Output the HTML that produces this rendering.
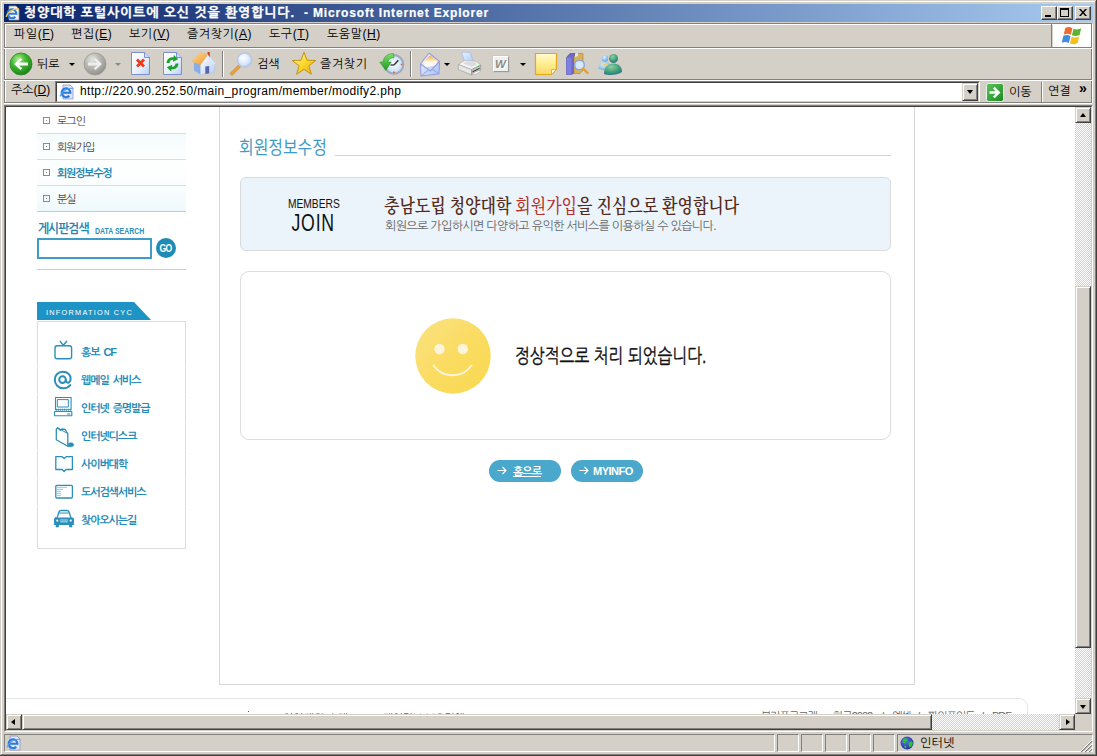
<!DOCTYPE html>
<html lang="ko">
<head>
<meta charset="utf-8">
<title>청양대학 포털사이트에 오신 것을 환영합니다.</title>
<style>
*{box-sizing:border-box;margin:0;padding:0}
html,body{width:1097px;height:756px;overflow:hidden;background:#d4d0c8}
body{font-family:"Liberation Sans","NanumGothic","Noto Sans CJK KR",sans-serif;font-size:12px;color:#000;position:relative}
.a{position:absolute;white-space:nowrap}
.u{text-decoration:underline}
#win{position:absolute;left:0;top:0;width:1097px;height:756px;background:#d4d0c8}
/* outer frame */
.f{position:absolute;background:#fff}
#title{position:absolute;left:4px;top:4px;width:1089px;height:18px;background:linear-gradient(90deg,#0a246a 0%,#a6caf0 100%);color:#fff;font-weight:bold;font-size:12px;line-height:18px;white-space:nowrap}
.cb{position:absolute;top:2px;width:16px;height:14px;background:#d4d0c8;border:1px solid;border-color:#fff #404040 #404040 #fff;box-shadow:inset -1px -1px 0 #808080}
.mi{position:absolute;top:27px;font-size:12px;line-height:14px;white-space:nowrap;letter-spacing:.55px}
.tl{position:absolute;font-size:12px;line-height:14px;white-space:nowrap}
.dd{position:absolute;width:0;height:0;border-left:3px solid transparent;border-right:3px solid transparent;border-top:3px solid #000}
.sep{position:absolute;width:2px;border-left:1px solid #808080;border-right:1px solid #fff}
.hsep{position:absolute;left:4px;width:1088px;height:2px;border-top:1px solid #808080;border-bottom:1px solid #fff}
.sunk{position:absolute;border:1px solid;border-color:#808080 #fff #fff #808080}
.sbtn{position:absolute;width:16px;height:16px;background:#d4d0c8;border:1px solid;border-color:#d4d0c8 #404040 #404040 #d4d0c8;box-shadow:inset 1px 1px 0 #fff,inset -1px -1px 0 #808080}
.track{position:absolute;background-color:#fff;background-image:linear-gradient(45deg,#d4d0c8 25%,transparent 25%,transparent 75%,#d4d0c8 75%),linear-gradient(45deg,#d4d0c8 25%,transparent 25%,transparent 75%,#d4d0c8 75%);background-size:2px 2px;background-position:0 0,1px 1px}
#viewport{position:absolute;left:6px;top:107px;width:1069px;height:607px;background:#fff;overflow:hidden}

#pg{position:absolute;left:-6px;top:-107px;width:1097px;height:756px;font-family:"Liberation Sans","NanumGothic","Noto Sans CJK KR",sans-serif}
.sm{position:absolute;left:37px;width:149px;height:26px;border-bottom:1px solid #d9dde0}
.sm i{position:absolute;left:6px;top:9px;width:7px;height:7px;border:1px solid #8c8c8c}
.sm i:after{content:"";position:absolute;left:2px;top:2px;width:1px;height:1px;background:#8c8c8c}
.sm span{position:absolute;left:20px;top:6px;font-size:11px;line-height:14px;color:#444;letter-spacing:-1px;white-space:nowrap}
.it{word-spacing:2.200px;position:absolute;left:81px;font-size:11px;line-height:14px;color:#258cb8;font-weight:bold;letter-spacing:-1.150px;white-space:nowrap}
.btn{position:absolute;top:460px;width:72px;height:22px;border-radius:11px;background:#4aa8cc;color:#fff;font-size:11px;font-weight:bold;line-height:22px;white-space:nowrap}
.ft{font-size:11px;line-height:14px;color:#666;letter-spacing:-1px}
</style>
</head>
<body>
<div id="win">
 <!-- window frame edges -->
 <div class="f" style="left:1px;top:1px;width:1094px;height:1px"></div>
 <div class="f" style="left:1px;top:1px;width:1px;height:753px"></div>
 <div class="f" style="left:0;top:755px;width:1097px;height:1px;background:#404040"></div>
 <div class="f" style="left:1096px;top:0;width:1px;height:756px;background:#404040"></div>
 <div class="f" style="left:1px;top:754px;width:1095px;height:1px;background:#808080"></div>
 <div class="f" style="left:1095px;top:1px;width:1px;height:754px;background:#808080"></div>

 <div id="title">
  <svg class="a" style="left:1px;top:1px" width="16" height="16" viewBox="0 0 16 16"><path d="M4 1h7l3 3v11H4z" fill="#f4f2ea" stroke="#8a8a9a" stroke-width=".8"/><path d="M3.200 8.800H11.400A4.400 4.400 0 1 0 10.300 11.700" fill="none" stroke="#2a7be0" stroke-width="2.100"/><path d="M1 12c2-6 9-9 13-8" fill="none" stroke="#f0c040" stroke-width="1.2"/></svg>
  <span class="a" id="ttext" style="left:20px;top:0;font-size:13px;letter-spacing:.86px;-webkit-text-stroke:.3px #fff">청양대학 포털사이트에 오신 것을 환영합니다.</span><span class="a" id="ttext2" style="left:300px;top:0;letter-spacing:.84px;-webkit-text-stroke:.2px #fff">- Microsoft Internet Explorer</span>
  <div class="cb" style="left:1037px"><div class="a" style="left:3px;top:8px;width:6px;height:2px;background:#000"></div></div>
  <div class="cb" style="left:1053px"><div class="a" style="left:2px;top:1px;width:9px;height:9px;border:1px solid #000;border-top-width:2px"></div></div>
  <div class="cb" style="left:1071px"><svg class="a" style="left:3px;top:2px" width="8" height="7" viewBox="0 0 8 7"><path d="M0 0h2l2 2.5L6 0h2L5 3.5 8 7H6L4 4.5 2 7H0l3-3.5z" fill="#000"/></svg></div>
 </div>

 <div class="hsep" style="top:23px"></div>
 <div class="sep" style="left:4px;top:24px;height:79px"></div>
 <div class="sep" style="left:1091px;top:24px;height:79px"></div>
 <!-- menu bar -->
 <span class="mi" style="left:14px">파일(<span class="u">F</span>)</span>
 <span class="mi" style="left:71px">편집(<span class="u">E</span>)</span>
 <span class="mi" style="left:129px">보기(<span class="u">V</span>)</span>
 <span class="mi" style="left:187px">즐겨찾기(<span class="u">A</span>)</span>
 <span class="mi" style="left:269px">도구(<span class="u">T</span>)</span>
 <span class="mi" style="left:327px">도움말(<span class="u">H</span>)</span>
 <div class="a" style="left:1051px;top:24px;width:1px;height:23px;background:#808080"></div>
 <div class="a" style="left:1053px;top:24px;width:38px;height:23px;background:#fff">
  <svg class="a" style="left:8px;top:2px" width="24" height="21" viewBox="0 0 22 19"><path d="M4 1.5c2.500-1 4.500-.8 6.500.4L9 8C7 6.800 5 6.700 2.500 7.700z" fill="#f26a2a"/><path d="M11.500 2.300c2 1 4.500 1 7-.3L17 8.200c-2.500 1.200-4.800 1.200-7 .2z" fill="#5cb531"/><path d="M2.200 8.800c2.500-1 4.500-.8 6.500.4L7.200 15.500c-2-1.200-4-1.300-6.500-.3z" fill="#3f8ce0"/><path d="M9.700 9.700c2 1 4.500 1 7-.3l-1.500 6.300c-2.500 1.200-4.800 1.200-7 .2z" fill="#f5c218"/></svg>
 </div>
 <div class="hsep" style="top:47px"></div>

 <!-- toolbar -->
 <div id="tb">
  <!-- back -->
  <svg class="a" style="left:9px;top:52px" width="24" height="24" viewBox="0 0 24 24"><defs><radialGradient id="gb" cx=".38" cy=".3" r=".75"><stop offset="0" stop-color="#b6ee8e"/><stop offset=".45" stop-color="#3fb82f"/><stop offset="1" stop-color="#1d7a1b"/></radialGradient><radialGradient id="gf" cx=".38" cy=".3" r=".75"><stop offset="0" stop-color="#e4e4e2"/><stop offset=".5" stop-color="#b4b4b0"/><stop offset="1" stop-color="#8e8e8a"/></radialGradient></defs><circle cx="12" cy="12" r="11" fill="url(#gb)" stroke="#2a8a26" stroke-width=".8"/><path d="M5 12l6.500-6 1.800 1.800L9.800 10.600H19v2.800H9.800l3.500 2.800L11.500 18z" fill="#fff"/></svg>
  <span class="tl" style="left:37px;top:57px">뒤로</span>
  <div class="dd" style="left:69px;top:63px"></div>
  <!-- forward -->
  <svg class="a" style="left:83px;top:52px" width="24" height="24" viewBox="0 0 24 24"><circle cx="12" cy="12" r="11" fill="url(#gf)" stroke="#9a9a96" stroke-width=".8"/><path d="M19 12l-6.500-6-1.800 1.800 3.500 2.800H5v2.800h9.200l-3.500 2.800L12.500 18z" fill="#eeeeec"/></svg>
  <div class="dd" style="left:115px;top:63px;border-top-color:#8a8a86"></div>
  <!-- stop -->
  <svg class="a" style="left:130px;top:51px" width="21" height="25" viewBox="0 0 21 25"><defs><linearGradient id="pg" x1="0" y1="0" x2="1" y2="1"><stop offset="0" stop-color="#ffffff"/><stop offset=".6" stop-color="#e6f0fc"/><stop offset="1" stop-color="#b4cdf2"/></linearGradient></defs><path d="M1.500 1.500h13l5 5v17h-18z" fill="url(#pg)" stroke="#7f8ed0" stroke-width="1"/><path d="M14.500 1.500v5h5" fill="#cfe0f8" stroke="#7f8ed0" stroke-width="1"/><path d="M6 9.500l2-2 2.500 2.500L13 7.500l2 2-2.500 2.500 2.500 2.500-2 2-2.500-2.500L8 16.500l-2-2L8.500 12z" fill="#f03a17"/></svg>
  <!-- refresh -->
  <svg class="a" style="left:162px;top:51px" width="21" height="25" viewBox="0 0 21 25"><path d="M1.500 1.500h13l5 5v17h-18z" fill="url(#pg)" stroke="#7f8ed0" stroke-width="1"/><path d="M14.500 1.500v5h5" fill="#cfe0f8" stroke="#7f8ed0" stroke-width="1"/><path d="M4.500 12c.2-4 3.300-6.300 7-5.800l.4-2.200 4.300 4.200-5.400 2.600.3-2c-1.800-.2-3.200.8-3.600 3.200z" fill="#1ea32a"/><path d="M16.500 12.500c-.2 4-3.300 6.300-7 5.800l-.4 2.200-4.300-4.200 5.400-2.600-.3 2c1.800.2 3.200-.8 3.600-3.200z" fill="#1ea32a"/></svg>
  <!-- home -->
  <svg class="a" style="left:191px;top:51px" width="25" height="25" viewBox="0 0 25 25"><defs><linearGradient id="hw" x1="0" y1="0" x2="1" y2="1"><stop offset="0" stop-color="#ffffff"/><stop offset="1" stop-color="#b7d0f4"/></linearGradient><linearGradient id="hr" x1="0" y1="0" x2="1" y2="1"><stop offset="0" stop-color="#ffe08a"/><stop offset="1" stop-color="#f0912e"/></linearGradient></defs><path d="M16.500 1h2.300v5.500l-2.300-2z" fill="#c8402a"/><path d="M3 11.500l6.500 1.500v10.500L3 19.500z" fill="#86aeea"/><path d="M9.500 13l7-9 7 8.500v8.500l-14 2.700z" fill="url(#hw)" stroke="#a9c2ea" stroke-width=".5"/><path d="M1 10.300L9.500 1.800l7.300 1.700L9.300 14z" fill="url(#hr)" stroke="#e8a850" stroke-width=".4"/><path d="M16.300 3.300l8 9.300-1 1.100-7.200-8z" fill="#dfe9fa"/><path d="M14.300 15.500l3.900-.6v7.300l-3.900.8z" fill="#5a64ac"/></svg>
  <div class="sep" style="left:222px;top:51px;height:26px"></div>
  <!-- search -->
  <svg class="a" style="left:228px;top:51px" width="26" height="26" viewBox="0 0 26 26"><defs><radialGradient id="lg" cx=".4" cy=".35" r=".7"><stop offset="0" stop-color="#ffffff"/><stop offset=".7" stop-color="#d4e6fa"/><stop offset="1" stop-color="#a9c8ee"/></radialGradient></defs><path d="M2 22.500l9-9 2 2-9 9z" fill="#e9a23c" stroke="#c47a1e" stroke-width=".6"/><circle cx="16.500" cy="9" r="7" fill="url(#lg)" stroke="#b7c8e6" stroke-width="1.600"/></svg>
  <span class="tl" style="left:257px;top:57px">검색</span>
  <!-- favorites star -->
  <svg class="a" style="left:291px;top:51px" width="26" height="25" viewBox="0 0 26 25"><defs><linearGradient id="sg" x1="0" y1="0" x2="1" y2="1"><stop offset="0" stop-color="#fff6a0"/><stop offset=".5" stop-color="#fbd92c"/><stop offset="1" stop-color="#e9a70e"/></linearGradient></defs><path d="M13 1.200l3 8 8.800.3-6.900 5.300 2.500 8.500L13 18.300 5.600 23.300l2.500-8.500L1.200 9.500 10 9.200z" fill="url(#sg)" stroke="#c89312" stroke-width="1" stroke-linejoin="round"/></svg>
  <span class="tl" style="left:320px;top:57px;letter-spacing:.6px">즐겨찾기</span>
  <!-- history -->
  <svg class="a" style="left:379px;top:52px" width="26" height="24" viewBox="0 0 26 24"><defs><radialGradient id="hc" cx=".5" cy=".45" r=".6"><stop offset="0" stop-color="#ffffff"/><stop offset="1" stop-color="#b4d6f6"/></radialGradient><linearGradient id="ha" x1="0" y1="0" x2="0" y2="1"><stop offset="0" stop-color="#7fe06a"/><stop offset="1" stop-color="#1f9a1e"/></linearGradient></defs><circle cx="15" cy="12.500" r="9.300" fill="url(#hc)" stroke="#a4a8be" stroke-width="2.200"/><path d="M15 13l4.300-4.800" stroke="#333" stroke-width="1.500"/><path d="M15 13h-3.500" stroke="#333" stroke-width="1.300"/><path d="M15 19.500v1.600M21.800 12.500h1.500" stroke="#f05020" stroke-width="1.500"/><path d="M14.500 1.500c-6 0-10 3.500-10.500 8.500H.8l6 8.500 5.500-8.500H8.800c.5-2.800 2.800-4.300 6.200-4.300z" fill="url(#ha)" stroke="#228a22" stroke-width=".5"/></svg>
  <div class="sep" style="left:410px;top:51px;height:26px"></div>
  <!-- mail -->
  <svg class="a" style="left:419px;top:52px" width="22" height="25" viewBox="0 0 22 25"><defs><linearGradient id="mg" x1="0" y1="0" x2="1" y2="1"><stop offset="0" stop-color="#f6faff"/><stop offset="1" stop-color="#9fc2f2"/></linearGradient><linearGradient id="ml" x1="0" y1="0" x2="0" y2="1"><stop offset="0" stop-color="#f4a838"/><stop offset=".55" stop-color="#fff6e0"/><stop offset="1" stop-color="#ffffff"/></linearGradient></defs><path d="M1.500 12L10 1l10.500 8.500-.5 12.500L2 24z" fill="url(#mg)" stroke="#9c9ce0" stroke-width="1.100" stroke-linejoin="round"/><path d="M4.500 9.500L11 3.500l7.500 5-1.500 5-11 1.500z" fill="url(#ml)"/><path d="M1.500 12l10 7 9-9.500" fill="none" stroke="#9c9ce0" stroke-width="1.100"/><path d="M2 24l8-6.500M20 22l-7-5" fill="none" stroke="#9c9ce0" stroke-width="1"/></svg>
  <div class="dd" style="left:444px;top:63px"></div>
  <!-- print -->
  <svg class="a" style="left:457px;top:51px" width="25" height="25" viewBox="0 0 25 25"><defs><linearGradient id="pp" x1="0" y1="0" x2="1" y2="1"><stop offset="0" stop-color="#eaf3ff"/><stop offset="1" stop-color="#a9c9f6"/></linearGradient></defs><path d="M4.500 1.200h8.500l3.500 9.500-8.500 1.300z" fill="url(#pp)" stroke="#9db8e8" stroke-width=".7"/><path d="M1.300 13.500l6.200-4 11.500.8 4.700 3.700-9.200 4.500z" fill="#f6f6f6" stroke="#a8a8a8" stroke-width=".6"/><path d="M6 12.500l3-2 9 .7 2.500 2-6 2.800z" fill="#dcdcdc"/><path d="M1.300 13.500l13.200 5v5.300L1.300 18.500z" fill="#e6e6e6" stroke="#9a9a9a" stroke-width=".6"/><path d="M14.500 18.500l9.200-4.500v5l-9.200 4.800z" fill="#c4c4c4" stroke="#8e8e8e" stroke-width=".6"/><path d="M15.500 20.300l7.200-3.600v1.100l-7.200 3.700z" fill="#3a3a3a"/><path d="M16 22.200l6-3 1.300 1.500-5.500 3z" fill="#fafafa" stroke="#9a9a9a" stroke-width=".5"/><path d="M21 15.800l1.200-.6" stroke="#3ac03a" stroke-width="1"/></svg>
  <!-- word -->
  <div class="a" style="left:493px;top:56px;width:16px;height:16px;background:#f0f0ee;border:1px solid;border-color:#fff #9a9a96 #9a9a96 #fff;box-shadow:0 0 0 1px #c8c8c4"><span class="a" style="left:1px;top:0;font:italic bold 11.500px/14px 'Liberation Sans',sans-serif;color:#8c8c8c;text-shadow:1px 1px 0 #fff">W</span></div>
  <div class="dd" style="left:520px;top:63px"></div>
  <!-- note -->
  <svg class="a" style="left:534px;top:52px" width="24" height="24" viewBox="0 0 24 24"><defs><linearGradient id="ng" x1="0" y1="0" x2="0" y2="1"><stop offset="0" stop-color="#fffbd0"/><stop offset=".5" stop-color="#ffee90"/><stop offset="1" stop-color="#fbd760"/></linearGradient></defs><path d="M1.500 1.500h21v16l-5 5h-16z" fill="url(#ng)" stroke="#e0a820" stroke-width="1.200"/><path d="M22.500 17.500h-5v5z" fill="#fff6c0" stroke="#e0a820" stroke-width=".8"/></svg>
  <!-- research -->
  <svg class="a" style="left:565px;top:52px" width="24" height="24" viewBox="0 0 24 24"><path d="M1.500 5.500L5 1.500h5v19l-3.500 2h-5z" fill="#6a68c8" stroke="#4a489a" stroke-width=".6"/><path d="M1.500 5.500h5v17h-5z" fill="#807ee0"/><path d="M9 4.500l4-3h5v17l-3 3H9z" fill="#d8b25a" stroke="#a8842e" stroke-width=".6"/><path d="M10 2l3-1 0 3-3 1z" fill="#e8e8f4"/><circle cx="14.500" cy="13" r="4.800" fill="#d6e8fa" stroke="#8aa8d8" stroke-width="1.400"/><path d="M18 16.500l4.500 4.500" stroke="#e0a030" stroke-width="2.400" stroke-linecap="round"/></svg>
  <!-- messenger -->
  <svg class="a" style="left:597px;top:52px" width="26" height="24" viewBox="0 0 26 24"><defs><radialGradient id="m1" cx=".4" cy=".3" r=".8"><stop offset="0" stop-color="#8fd0a0"/><stop offset=".6" stop-color="#3a9a78"/><stop offset="1" stop-color="#2a6a9a"/></radialGradient><radialGradient id="m2" cx=".4" cy=".3" r=".8"><stop offset="0" stop-color="#dff0ff"/><stop offset=".6" stop-color="#8ac0e8"/><stop offset="1" stop-color="#5a98d0"/></radialGradient></defs><circle cx="8" cy="6.500" r="3.200" fill="url(#m2)"/><path d="M1.500 17c0-5 3-7 6.500-7s5.500 2 6 5l-4 4z" fill="url(#m2)"/><path d="M5 12l3 3 3-3z" fill="#e8d080"/><circle cx="16.500" cy="6.500" r="4.500" fill="url(#m1)"/><path d="M7 22c0-7 4-10.500 9.500-10.500S25 15 25 20c-4 3-13 4-18 2z" fill="url(#m1)"/></svg>
 </div>
 <div class="hsep" style="top:79px"></div>

 <!-- address bar -->
 <div id="ab">
  <span class="tl" style="left:11px;top:83px">주소(<span class="u">D</span>)</span>
  <div class="a" style="left:55px;top:81px;width:925px;height:22px;border:1px solid;border-color:#808080 #fff #fff #808080"></div>
  <div class="a" style="left:56px;top:82px;width:923px;height:20px;background:#fff;border:1px solid;border-color:#404040 #d4d0c8 #d4d0c8 #404040"></div>
  <svg class="a" style="left:59px;top:84px" width="16" height="16" viewBox="0 0 16 16"><path d="M4 1h7l3 3v11H4z" fill="#dfe6fa" stroke="#8a92c8" stroke-width=".8"/><path d="M3.200 8.800H11.400A4.400 4.400 0 1 0 10.300 11.700" fill="none" stroke="#2a7be0" stroke-width="2.100"/><path d="M1 12.500c2-6 9-9 13-8" fill="none" stroke="#5aa0f0" stroke-width="1.100"/></svg>
  <span class="tl" id="url" style="left:80px;top:84px;letter-spacing:.34px">http://220.90.252.50/main_program/member/modify2.php</span>
  <div class="sbtn" style="left:962px;top:83px;height:18px"><div class="dd" style="left:4px;top:6px;border-left-width:3.500px;border-right-width:3.500px;border-top-width:4px"></div></div>
  <svg class="a" style="left:986px;top:83px" width="18" height="19" viewBox="0 0 18 19"><defs><linearGradient id="go" x1="0" y1="0" x2="1" y2="1"><stop offset="0" stop-color="#5ec45a"/><stop offset="1" stop-color="#158a1a"/></linearGradient></defs><rect x=".5" y=".5" width="17" height="18" rx="2" fill="url(#go)" stroke="#e8f4e8" stroke-width="1"/><path d="M3.500 8.200h6L7 5.500l1.700-1.700 5.800 5.700-5.800 5.700L7 13.500l2.500-2.700h-6z" fill="#fff"/></svg>
  <span class="tl" style="left:1009px;top:85px">이동</span>
  <div class="sep" style="left:1041px;top:82px;height:21px"></div>
  <span class="tl" style="left:1048px;top:84px">연결</span>
  <span class="tl" style="left:1079px;top:80px;font-size:14px;line-height:16px;font-weight:bold">»</span>
  <div class="hsep" style="top:102px"></div>
 </div>

 <!-- viewport frame -->
 <div class="a" style="left:4px;top:105px;width:1089px;height:627px;border:1px solid;border-color:#808080 #fff #fff #808080"></div>
 <div class="a" style="left:5px;top:106px;width:1087px;height:625px;border:1px solid;border-color:#404040 #d4d0c8 #d4d0c8 #404040"></div>
 <div id="viewport"><div id="pg">
  <!-- main column frame -->
  <div class="a" style="left:219px;top:90px;width:696px;height:595px;border:1px solid #d6d6d6"></div>
  <!-- sidebar menu -->
  <div class="a" style="left:37px;top:134px;width:149px;height:77px;background:linear-gradient(180deg,rgba(228,246,250,.4),rgba(250,254,255,.2) 35%,rgba(240,250,252,.25) 60%,rgba(224,245,250,.55))"></div>
  <div class="sm" style="top:108px"><i></i><span>로그인</span></div>
  <div class="sm" style="top:134px"><i></i><span>회원가입</span></div>
  <div class="sm" style="top:160px"><i></i><span style="color:#1a86b4;font-weight:bold;letter-spacing:-1.300px">회원정보수정</span></div>
  <div class="sm" style="top:186px;border-bottom-color:#a5d6e8"><i></i><span>분실</span></div>
  <!-- search -->
  <span class="a" id="gs" style="left:38px;top:221px;font-size:13px;line-height:16px;font-weight:bold;color:#1f86b2;letter-spacing:-1px;transform:scaleX(.9);transform-origin:0 0">게시판검색</span>
  <span class="a" id="ds" style="left:95px;top:224.500px;font-size:9.500px;line-height:11px;font-weight:bold;color:#2a8fba;transform:scaleX(.73);transform-origin:0 0">DATA SEARCH</span>
  <div class="a" style="left:37px;top:238px;width:115px;height:21px;border:2px solid #3f9cc6;background:#fff"></div>
  <div class="a" style="left:156px;top:238px;width:20px;height:20px;border-radius:10px;background:#1f8ab6;color:#fff;font-size:9px;font-weight:bold;line-height:20px;text-align:center;letter-spacing:-.8px;text-indent:-1px"><span style="display:inline-block;font-size:10.500px;transform:scaleX(.82)">GO</span></div>
  <div class="a" style="left:37px;top:269px;width:149px;height:1px;background:#a9d8ea"></div>
  <!-- info box -->
  <svg class="a" style="left:37px;top:302px" width="115" height="19" viewBox="0 0 115 19"><path d="M0 0h97l17 18H0z" fill="#1e94c6"/><text x="9" y="12.500" font-family="Liberation Sans,sans-serif" font-size="7.500" fill="#fff" letter-spacing="1.300" textLength="87" lengthAdjust="spacingAndGlyphs">INFORMATION CYC</text></svg>
  <div class="a" style="left:37px;top:321px;width:149px;height:228px;border:1px solid #dcdcdc;background:#fff"></div>
  <div class="a" style="left:37px;top:366px;width:149px;height:1px;background:#fff"></div><div class="a" style="left:37px;top:394px;width:149px;height:1px;background:#fff"></div><div class="a" style="left:37px;top:422px;width:149px;height:1px;background:#fff"></div><div class="a" style="left:37px;top:450px;width:149px;height:1px;background:#fff"></div><div class="a" style="left:37px;top:478px;width:149px;height:1px;background:#fff"></div><div class="a" style="left:37px;top:506px;width:149px;height:1px;background:#fff"></div>
  <svg class="a" id="icons" style="left:50px;top:336px" width="30" height="200" viewBox="50 336 30 200" fill="none" stroke="#2a8fba" stroke-width="1.400" stroke-linejoin="round" stroke-linecap="round">
   <!-- tv -->
   <path d="M60.300 341.300l3 4 3.400-4"/><rect x="55" y="345.800" width="16.600" height="13" rx="2.200"/>
   <!-- at -->
   <circle cx="62.500" cy="379.600" r="3.300" stroke-width="2"/><path d="M66 380.500c.3 3.500 4.300 2.800 4.600-1.500.4-4.300-3.300-7.300-7.800-7.300-4.600 0-8 3.500-8 8 0 4.800 3.700 8.600 8.300 8.600 3 0 5.600-1.300 7.200-3.200" stroke-width="2"/>
   <!-- computer -->
   <rect x="55.500" y="397.500" width="15.600" height="12.200" stroke-width="1.100"/><rect x="57.700" y="399.600" width="10.600" height="7.400" stroke-width="1"/><path d="M56 409.700h15" stroke-width="1.800" stroke-dasharray="1 1" stroke-linecap="butt"/><rect x="54.600" y="411.500" width="17.200" height="4.300" stroke-width="1.100"/><path d="M67.500 414h2.500" stroke-width="1"/>
   <!-- folder -->
   <path d="M56.300 429.300v10.500l11.500 6.400v-12.400l-2.600-4.300-3.300-.5-1.500 1.300-2.700-2.500z" stroke-width="1.300"/><path d="M57.800 428l8.500 4.800" stroke-width="1"/><path d="M68.500 443.500c2.500-1.500 5-.5 5.300 1.200.2 1.500-3 2.800-5.800 1.800z" fill="#2a8fba" stroke-width=".6"/>
   <!-- book -->
   <path d="M55.800 456.700h6.200l2.100 1.800 2.100-1.800h6.200v12.800h-6.300l-2 2-2-2h-6.300z" stroke-width="1.300"/>
   <!-- board -->
   <rect x="55.800" y="485.300" width="16.600" height="12.700" rx="1" stroke-width="1.300"/><path d="M57.500 487.300h9M57.500 489.300h5M57.500 491.300h4M57.500 493.300h3M57.500 495.300h3" stroke-width="1" stroke-dasharray="1 1" stroke-linecap="butt"/>
   <!-- car -->
   <path d="M57 518l2-6.300c.3-.8 1-1.200 2-1.200h6c1 0 1.700.4 2 1.200l2 6.300" stroke-width="1.300"/><path d="M59.500 513h9" stroke-width="1"/><path d="M55.500 518h17c.8 0 1 .5 1 1.200v4.300h-19v-4.300c0-.7.200-1.200 1-1.200z" fill="#2a8fba" stroke-width="1"/><circle cx="57.300" cy="520.600" r="1.100" fill="#fff" stroke="none"/><circle cx="70.700" cy="520.600" r="1.100" fill="#fff" stroke="none"/><path d="M60.500 520h7M60.500 521.800h7" stroke="#fff" stroke-width=".7"/><path d="M54.300 524.500h19.400" stroke-width="1.200"/><path d="M56 525v2h2.600v-2zM69.400 525v2h2.600v-2z" fill="#2a8fba" stroke-width=".6"/>
  </svg>
  <span class="it" style="top:345px">홍보 CF</span>
  <span class="it" style="top:373px">웹메일 서비스</span>
  <span class="it" style="top:401px">인터넷 증명발급</span>
  <span class="it" style="top:429px">인터넷디스크</span>
  <span class="it" style="top:457px">사이버대학</span>
  <span class="it" style="top:485px">도서검색서비스</span>
  <span class="it" style="top:513px">찾아오시는길</span>

  <!-- heading -->
  <span class="a" id="h1" style="left:239px;top:136px;font-family:'Liberation Sans','Noto Sans CJK KR','NanumGothic',sans-serif;font-weight:400;font-size:18px;line-height:24px;color:#3d9cc5;transform:scaleX(.885);transform-origin:0 0">회원정보수정</span>
  <div class="a" style="left:335px;top:155px;width:556px;height:1px;background:#b9dcea"></div>
  <!-- banner -->
  <div class="a" style="left:240px;top:177px;width:651px;height:74px;border:1px solid #d9dcde;border-radius:6px;background:#ebf4fa"></div>
  <span class="a" id="mb" style="left:287px;top:197px;width:53px;text-align:center;font-size:13px;line-height:14px;color:#111"><span style="display:inline-block;transform:scaleX(.79);transform-origin:50% 50%;margin:0 -20px">MEMBERS</span></span>
  <span class="a" id="jn" style="left:287px;top:211px;width:53px;text-align:center;font-size:23px;line-height:24px;color:#111"><span style="display:inline-block;transform:scaleX(.77);transform-origin:50% 50%;margin:0 -20px;letter-spacing:1px">JOIN</span></span>
  <span class="a" id="bh" style="left:384px;top:195px;font-family:'Liberation Serif','Noto Serif CJK KR','Noto Serif CJK SC',serif;font-weight:600;font-size:19px;line-height:24px;color:#552a1a;transform:scaleX(.84);transform-origin:0 0">충남도립 청양대학 <span style="color:#b5322a;font-weight:500">회원가입</span>을 진심으로 환영합니다</span>
  <span class="a" id="bs" style="left:385px;top:219px;font-size:12px;line-height:15px;color:#666;letter-spacing:-.62px">회원으로 가입하시면 다양하고 유익한 서비스를 이용하실 수 있습니다.</span>
  <!-- result box -->
  <div class="a" style="left:240px;top:271px;width:651px;height:169px;border:1px solid #dcdcdc;border-radius:9px;background:#fff"></div>
  <svg class="a" style="left:414px;top:317px" width="78" height="78" viewBox="0 0 78 78"><defs><linearGradient id="sm" x1="0" y1="0" x2="1" y2="1"><stop offset="0" stop-color="#fbe284"/><stop offset=".5" stop-color="#fadc62"/><stop offset="1" stop-color="#f9d84e"/></linearGradient></defs><circle cx="39" cy="39" r="37.700" fill="url(#sm)"/><circle cx="25.500" cy="32" r="5.200" fill="#fdf4dc"/><circle cx="48.800" cy="32" r="5.200" fill="#fdf4dc"/><path d="M19.500 48.500c9 13 29 13 38 0" fill="none" stroke="#fdf4dc" stroke-width="2" stroke-linecap="round"/></svg>
  <span class="a" id="msg" style="left:515px;top:343px;font-size:20px;line-height:26px;color:#111;-webkit-text-stroke:.35px #111;transform:scaleX(.79);transform-origin:0 0">정상적으로 처리 되었습니다.</span>
  <!-- buttons -->
  <div class="btn" style="left:489px"><svg class="a" style="left:8px;top:5px" width="10" height="11" viewBox="0 0 10 11"><path d="M.5 5.500h8M5.500 2l3.500 3.500L5.500 9" fill="none" stroke="#fff" stroke-width="1.100"/></svg><span class="a" id="b1" style="left:24px;top:0;text-decoration:underline;letter-spacing:-1px">홈으로</span></div>
  <div class="btn" style="left:571px"><svg class="a" style="left:8px;top:5px" width="10" height="11" viewBox="0 0 10 11"><path d="M.5 5.500h8M5.500 2l3.500 3.500L5.500 9" fill="none" stroke="#fff" stroke-width="1.100"/></svg><span class="a" id="b2" style="left:22px;top:0;letter-spacing:-.5px">MYINFO</span></div>
  <!-- footer -->
  <div class="a" style="left:0;top:698px;width:1028px;height:40px;border:1px solid #e4e4e4;border-left:0;border-radius:0 9px 0 0"></div>
  <div class="a" style="left:248px;top:711px;width:1px;height:1px;background:#555"></div>
  <span class="a ft" id="f1" style="left:283px;top:711px;letter-spacing:0">청양대학 소개</span>
  <span class="a ft" style="left:365px;top:711px">|</span>
  <span class="a ft" id="f1b" style="left:383px;top:711px;letter-spacing:-.5px">개인정보 보호정책</span>
  <span class="a ft" id="f2" style="left:761px;top:709px">부가프로그램</span>
  <span class="a ft" style="left:823px;top:709px">:</span>
  <span class="a ft" id="f3" style="left:833px;top:709px">한글2002</span>
  <span class="a ft" style="left:881px;top:709px">/</span>
  <span class="a ft" id="f4" style="left:892px;top:709px">엑셀</span>
  <span class="a ft" style="left:917px;top:709px">/</span>
  <span class="a ft" id="f5" style="left:928px;top:709px">파워포인트</span>
  <span class="a ft" style="left:981px;top:709px">/</span>
  <span class="a ft" id="f6" style="left:992px;top:709px">PDF</span>
 </div></div>

 <!-- scrollbars -->
 <div id="sb">
  <div class="track" style="left:1075px;top:107px;width:16px;height:607px"></div>
  <div class="sbtn" style="left:1075px;top:107px"><div class="dd" style="left:4px;top:5px;border-top:0;border-bottom:4px solid #000;border-left-width:3.500px;border-right-width:3.500px"></div></div>
  <div class="sbtn" style="left:1075px;top:286px;height:362px"></div>
  <div class="sbtn" style="left:1075px;top:698px"><div class="dd" style="left:4px;top:6px;border-top-width:4px;border-left-width:3.500px;border-right-width:3.500px"></div></div>
  <div class="track" style="left:6px;top:714px;width:1069px;height:16px"></div>
  <div class="sbtn" style="left:6px;top:714px"><div class="dd" style="left:4px;top:4px;border:0;border-top:3.500px solid transparent;border-bottom:3.500px solid transparent;border-right:4px solid #000"></div></div>
  <div class="sbtn" style="left:22px;top:714px;width:910px"></div>
  <div class="sbtn" style="left:1059px;top:714px"><div class="dd" style="left:6px;top:4px;border:0;border-top:3.500px solid transparent;border-bottom:3.500px solid transparent;border-left:4px solid #000"></div></div>
  <div class="a" style="left:1075px;top:714px;width:16px;height:16px;background:#d4d0c8"></div>
 </div>

 <!-- status bar -->
 <div id="st">
  <div class="sunk" style="left:4px;top:734px;width:771px;height:18px"></div>
  <div class="sunk" style="left:777px;top:734px;width:22px;height:18px"></div>
  <div class="sunk" style="left:801px;top:734px;width:22px;height:18px"></div>
  <div class="sunk" style="left:825px;top:734px;width:22px;height:18px"></div>
  <div class="sunk" style="left:849px;top:734px;width:22px;height:18px"></div>
  <div class="sunk" style="left:873px;top:734px;width:22px;height:18px"></div>
  <div class="sunk" style="left:897px;top:734px;width:196px;height:18px"></div>
  <svg class="a" style="left:6px;top:735px" width="16" height="16" viewBox="0 0 16 16"><path d="M4 1h7l3 3v11H4z" fill="#dfe6fa" stroke="#8a92c8" stroke-width=".8"/><path d="M3.200 8.800H11.400A4.400 4.400 0 1 0 10.300 11.700" fill="none" stroke="#2a7be0" stroke-width="2.100"/><path d="M1 12.500c2-6 9-9 13-8" fill="none" stroke="#5aa0f0" stroke-width="1.100"/></svg>
  <svg class="a" style="left:900px;top:736px" width="14" height="14" viewBox="0 0 14 14"><defs><radialGradient id="gl" cx=".4" cy=".35" r=".7"><stop offset="0" stop-color="#5a7af0"/><stop offset="1" stop-color="#1a2a9a"/></radialGradient></defs><circle cx="7" cy="7" r="6.500" fill="url(#gl)"/><path d="M3 3.500c1.500-1.500 3.500-1.500 4.500-.5L6.500 6 4 7.500 2.500 6zM8.500 7l3-2 1.500 2-1.500 3.500-2.500 1zM4 9.500l2 .5.500 2-1.500.5z" fill="#2fc030"/></svg>
  <span class="tl" style="left:920px;top:736px;letter-spacing:.3px">인터넷</span>
  <svg class="a" style="left:1079.500px;top:739.500px" width="13" height="13" viewBox="0 0 13 13"><path d="M12 1L1 12M12 5L5 12M12 9L9 12" stroke="#808080" stroke-width="1.400"/><path d="M12 0L0 12M12 4L4 12M12 8L8 12" stroke="#fff" stroke-width="1"/></svg>
 </div>
</div>
</body>
</html>
